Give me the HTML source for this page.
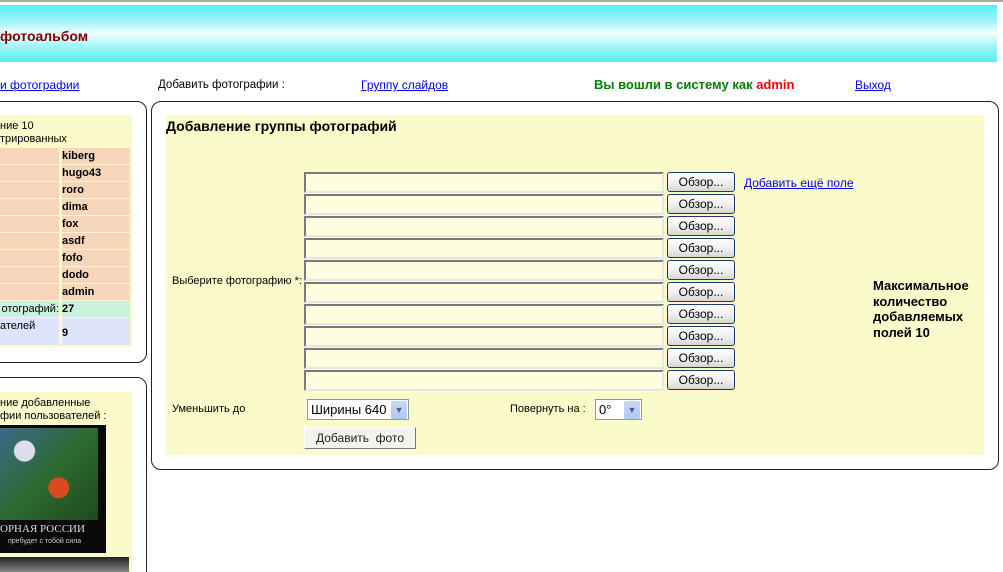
<!DOCTYPE html>
<html><head><meta charset="utf-8"><style>
*{box-sizing:border-box}
html,body{overflow:hidden;height:572px;margin:0}
body{width:1003px;background:#fff;font-family:"Liberation Sans",Arial,sans-serif;font-size:11px}
#w{position:relative;width:1003px;height:572px;overflow:hidden}
.a{position:absolute;white-space:nowrap}
a{color:#00e;text-decoration:underline}
.hdr{left:0;top:5px;width:997px;height:57px;background:linear-gradient(#55eef0 0%,#a5f6f7 30%,#f2fefe 50%,#a5f6f7 72%,#55eef0 100%)}
.box{border:1.5px solid #222;border-radius:10px}
.yel{background:#fbfacb}
.row{left:0;width:131px;height:17px}
.c1{position:absolute;left:0;width:59px;height:16px;background:#f7d5bb;overflow:hidden;white-space:nowrap}
.c2{position:absolute;left:62px;width:68px;height:16px;background:#f7d5bb;font-weight:bold;padding:2px 0 0 0}
.inp{left:304px;width:360px;height:21px;background:#fdfde0;border:2px solid;border-color:#7a7a7a #e6e6e6 #e6e6e6 #7a7a7a}
.btn{left:667px;width:68px;height:20px;border:1px solid #1c3a6e;border-radius:3px;background:linear-gradient(#fff,#ececec 60%,#d6d6d0);font-size:12px;text-align:center;line-height:18px;color:#000}
.sel{border:1px solid #7f9db9;background:#fff;font-size:13px;line-height:19px;padding-left:3px}
.arr{position:absolute;right:1px;top:1px;width:16px;height:18px;background:linear-gradient(#c8d8f8,#b0c8f0);border-radius:2px;color:#4d6185;font-size:9px;text-align:center;line-height:18px}
</style></head><body><div id="w">
<div class="a" style="left:0;top:0;width:1003px;height:2px;background:#a8a8a0"></div>
<div class="a hdr"></div>
<div class="a" style="left:0;top:28px;font-size:14px;font-weight:bold;color:#800000">фотоальбом</div>

<a class="a" style="left:0;top:78px;font-size:12px">и фотографии</a>
<div class="a" style="left:158px;top:79px;font-size:11.5px">Добавить фотографии :</div>
<a class="a" style="left:361px;top:78px;font-size:12px">Группу слайдов</a>
<div class="a" style="left:594px;top:77px;font-size:13px;font-weight:bold;color:#008000">Вы вошли в систему как <span style="color:#e00">admin</span></div>
<a class="a" style="left:855px;top:78px;font-size:12px">Выход</a>

<div class="a box" style="left:-12px;top:101px;width:159px;height:262px"></div>
<div class="a yel" style="left:0;top:115px;width:132px;height:232px"></div>
<div class="a" style="left:0;top:120px;line-height:13px">ние 10<br>трированных</div>
<div class="a" style="left:0;top:148px;width:132px">
<div class="a row" style="top:0"><div class="c1"></div><div class="c2">kiberg</div></div>
<div class="a row" style="top:17px"><div class="c1"></div><div class="c2">hugo43</div></div>
<div class="a row" style="top:34px"><div class="c1"></div><div class="c2">roro</div></div>
<div class="a row" style="top:51px"><div class="c1"></div><div class="c2">dima</div></div>
<div class="a row" style="top:68px"><div class="c1"></div><div class="c2">fox</div></div>
<div class="a row" style="top:85px"><div class="c1"></div><div class="c2">asdf</div></div>
<div class="a row" style="top:102px"><div class="c1"></div><div class="c2">fofo</div></div>
<div class="a row" style="top:119px"><div class="c1"></div><div class="c2">dodo</div></div>
<div class="a row" style="top:136px"><div class="c1"></div><div class="c2">admin</div></div>
<div class="a row" style="top:153px"><div class="c1" style="background:#c8f2dc;padding-top:2px;direction:rtl;text-align:right">:отографий</div><div class="c2" style="background:#c8f2dc">27</div></div>
<div class="a row" style="top:170px;height:28px"><div class="c1" style="background:#dce3fa;height:27px;padding-top:2px">ателей</div><div class="c2" style="background:#dce3fa;height:27px;padding-top:9px">9</div></div>
</div>

<div class="a box" style="left:-12px;top:377px;width:159px;height:260px"></div>
<div class="a yel" style="left:0;top:392px;width:132px;height:190px"></div>
<div class="a" style="left:0;top:397px;line-height:13px">ние добавленные<br>фии пользователей :</div>
<div class="a" style="left:0;top:425px;width:106px;height:128px;background:#0a0a0a"></div>
<div class="a" style="left:0;top:428px;width:98px;height:92px;background:radial-gradient(circle at 60% 65%,#d84a20 0 12%,transparent 13%),radial-gradient(circle at 25% 25%,#dde 0 10%,transparent 11%),linear-gradient(135deg,#3a6a8a,#2d6a30 50%,#1e4a1e)"></div>
<div class="a" style="left:0;top:523px;color:#ddd;font-family:'Liberation Serif',serif;font-size:11px">ОРНАЯ РОССИИ</div>
<div class="a" style="left:8px;top:538px;color:#ccc;font-size:7px">пребудет с тобой сила</div>
<div class="a" style="left:0;top:557px;width:129px;height:15px;background:linear-gradient(#222,#888)"></div>

<div class="a box" style="left:151px;top:101px;width:848px;height:369px"></div>
<div class="a yel" style="left:166px;top:115px;width:818px;height:340px"></div>
<div class="a" style="left:166px;top:118px;font-size:14px;font-weight:bold">Добавление группы фотографий</div>
<div class="a" style="left:172px;top:275px">Выберите фотографию *:</div>

<div class="a inp" style="top:172px"></div><div class="a btn" style="top:172px">Обзор...</div>
<div class="a inp" style="top:194px"></div><div class="a btn" style="top:194px">Обзор...</div>
<div class="a inp" style="top:216px"></div><div class="a btn" style="top:216px">Обзор...</div>
<div class="a inp" style="top:238px"></div><div class="a btn" style="top:238px">Обзор...</div>
<div class="a inp" style="top:260px"></div><div class="a btn" style="top:260px">Обзор...</div>
<div class="a inp" style="top:282px"></div><div class="a btn" style="top:282px">Обзор...</div>
<div class="a inp" style="top:304px"></div><div class="a btn" style="top:304px">Обзор...</div>
<div class="a inp" style="top:326px"></div><div class="a btn" style="top:326px">Обзор...</div>
<div class="a inp" style="top:348px"></div><div class="a btn" style="top:348px">Обзор...</div>
<div class="a inp" style="top:370px"></div><div class="a btn" style="top:370px">Обзор...</div>
<a class="a" style="left:744px;top:176px;font-size:12px">Добавить ещё поле</a>
<div class="a" style="left:873px;top:278px;font-size:13px;font-weight:bold;line-height:15.5px">Максимальное<br>количество<br>добавляемых<br>полей 10</div>

<div class="a" style="left:172px;top:403px">Уменьшить до</div>
<div class="a sel" style="left:307px;top:399px;width:102px;height:21px">Ширины 640<div class="arr">&#9660;</div></div>
<div class="a" style="left:510px;top:403px">Повернуть на :</div>
<div class="a sel" style="left:595px;top:399px;width:47px;height:21px">0°<div class="arr">&#9660;</div></div>
<div class="a" style="left:304px;top:427px;width:112px;height:22px;border:1px solid;border-color:#fff #777 #777 #fff;background:#f4f3ec;font-size:12px;text-align:center;line-height:20px;color:#222">Добавить&nbsp; фото</div>
</div></body></html>
